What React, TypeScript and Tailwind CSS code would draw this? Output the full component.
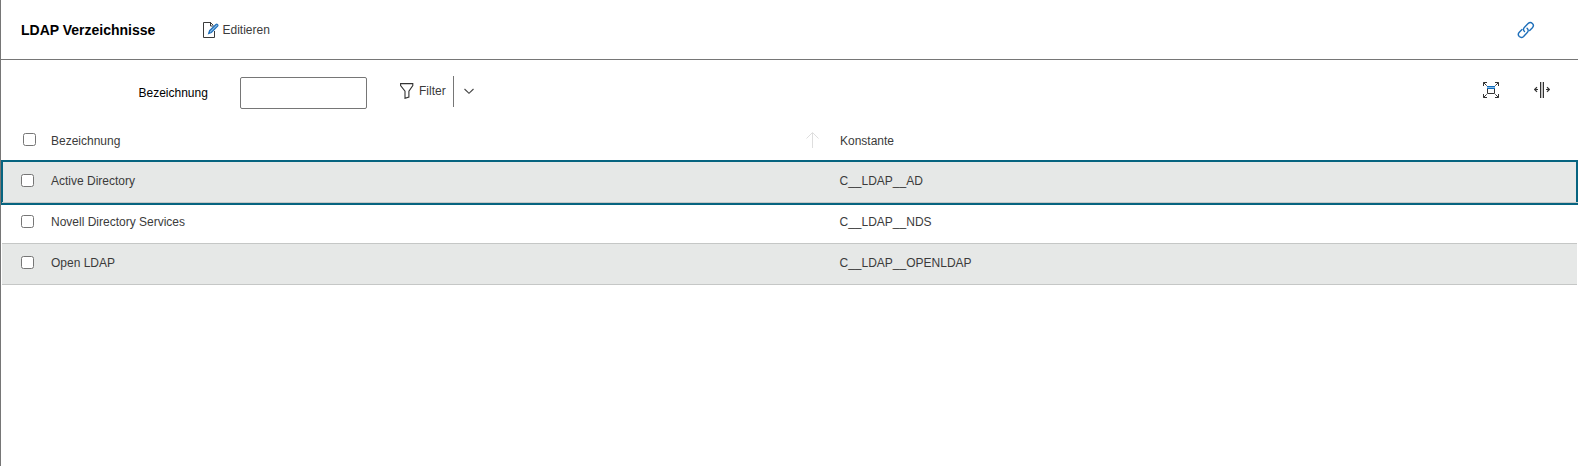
import React from "react";

const rows = [
  { name: "Active Directory", constant: "C__LDAP__AD" },
  { name: "Novell Directory Services", constant: "C__LDAP__NDS" },
  { name: "Open LDAP", constant: "C__LDAP__OPENLDAP" },
];

function EditIcon() {
  return (
    <svg className="h-4 w-4 shrink-0" viewBox="0 0 16 16" fill="none">
      <path d="M8 .5H.5v15h11V9M7.500.5v3.500H10M7.500.5l3 3" stroke="#3b3b3b" />
      <path d="m5.700 11.500.9-2.800 6.400-6.200c1-.9 2.500.6 1.600 1.600L8.300 10.500z" fill="#8fbfe8" stroke="#1e6fba" strokeWidth="1.2" />
    </svg>
  );
}

function LinkIcon() {
  return (
    <svg className="h-[18px] w-[18px]" viewBox="0 0 18 18" fill="none" stroke="#1e6fba" strokeWidth="1.4" strokeLinecap="round">
      <path d="M7.500 10.600c-1.400-1.400-1.300-3 0-4.300l3.600-3.700c1.300-1.300 3.100-1.300 4.300-.2 1.200 1.200 1.200 3 0 4.300l-2.700 2.700" />
      <path d="M10.100 7.200c1.400 1.400 1.500 3 .2 4.300l-3.700 3.900c-1.300 1.300-3.100 1.300-4.300.2-1.200-1.200-1.200-3 0-4.300l2.700-2.700" />
    </svg>
  );
}

function FilterIcon() {
  return (
    <svg className="h-4 w-[14px] shrink-0" viewBox="0 0 14 16" fill="none" stroke="#333" strokeWidth="1.1">
      <path d="M.6.6h12.200v2L8.900 8.100v6L5 15.300V8.100L.6 2.600z" />
    </svg>
  );
}

function FitIcon() {
  return (
    <svg className="h-4 w-4" viewBox="0 0 16 16" fill="none">
      <path d="M.5 4V.5H4M12 .5h3.500V4M15.500 12v3.500H12M4 15.500H.5V12M.5.5l3.200 3.200M15.500.5l-3.200 3.200M15.500 15.500l-3.200-3.200M.5 15.500l3.200-3.200" stroke="#333" />
      <path d="M4.500 7v4.500h7V7" stroke="#333" fill="#fafafa" />
      <path d="M4 4h8v3H4z" fill="#83b9e6" />
      <path d="M4 4.500h8M4 6.500h8" stroke="#0f6cbd" />
    </svg>
  );
}

function ColumnsIcon() {
  return (
    <svg className="h-4 w-4" viewBox="0 0 16 16" fill="none" stroke="#333">
      <path d="M7 0h2v16H7z" fill="#c8c8c8" stroke="none" />
      <path d="M6.500 0v16M9.500 0v16" />
      <path d="M4 7.500H.8M3 5.200.7 7.500 3 9.800M12 7.500h3.200M13 5.200l2.300 2.300L13 9.800" strokeWidth="1.2" />
    </svg>
  );
}

function Checkbox({ label }: { label: string }) {
  return (
    <input
      type="checkbox"
      aria-label={label}
      className="h-[13px] w-[13px] shrink-0 appearance-none rounded-[2.5px] border border-[#767676] bg-white"
    />
  );
}

export default function App() {
  return (
    <div className="h-[466px] w-full overflow-hidden border-l border-[#767676] bg-white font-['Liberation_Sans',Arial,sans-serif] text-xs text-[#3b3b3b]">
      <header className="flex h-[60px] items-center border-b border-[#767676] pl-5">
        <h1 className="w-[182px] text-sm font-bold text-black">LDAP Verzeichnisse</h1>
        <button className="flex items-center gap-[3.5px]">
          <EditIcon />
          <span>Editieren</span>
        </button>
        <button aria-label="Link" className="mr-[43px] ml-auto">
          <LinkIcon />
        </button>
      </header>

      <div className="flex h-[61px] items-start pt-[15px]">
        <label htmlFor="bez" className="mt-[10px] ml-[137.5px] w-[101.5px] text-black">
          Bezeichnung
        </label>
        <input id="bez" className="mt-0.5 h-8 w-[127px] rounded-[2px] border border-[#767676] bg-white" />
        <button className="ml-[33px] flex h-8 items-center gap-[5px] pr-[7px]">
          <FilterIcon />
          <span>Filter</span>
        </button>
        <button aria-label="Filter options" className="mt-px flex h-[31px] items-center border-l border-[#767676] pl-2.5">
          <svg className="h-[7px] w-[11px]" viewBox="0 0 11 7" fill="none" stroke="#444" strokeWidth="1.1">
            <path d="m.5 1 4.500 4.300L9.500 1" />
          </svg>
        </button>
        <div className="mt-[7px] mr-7 ml-auto flex gap-[35px]">
          <FitIcon />
          <ColumnsIcon />
        </div>
      </div>

      <div className="flex h-[39px] items-start pt-3 pl-[22px]">
        <Checkbox label="Alle" />
        <span className="ml-[15px] w-[755px]">Bezeichnung</span>
        <svg className="mt-[-1px] h-4 w-[14px]" viewBox="0 0 14 16" fill="none" stroke="#dedede">
          <path d="M6.500 16V1M.5 6.500l6-6 6 6" />
        </svg>
        <span className="ml-5">Konstante</span>
      </div>

      <div className="mt-0.5 mr-px ml-px">
        {rows.map((row, i) => (
          <div
            key={row.name}
            className={
              i === 0
                ? "relative -mr-px flex h-[41px] items-start border-b border-[#c5c7c6] bg-[#e6e8e7] pt-3 pl-[19px] shadow-[inset_1px_0_#066480,inset_-2px_0_#066480,0_-2px_#066480,0_2px_#066480,-1px_0_#066480,-1px_-2px_#066480,-1px_2px_#066480]"
                : "flex h-[41px] items-start border-b border-[#c5c7c6] pt-3 pl-[19px] even:bg-white odd:bg-[#e6e8e7]"
            }
          >
            <Checkbox label={row.name} />
            <span className="mt-[-1px] ml-[17px] w-[788.5px]">{row.name}</span>
            <span className="mt-[-1px]">{row.constant}</span>
          </div>
        ))}
      </div>
    </div>
  );
}
